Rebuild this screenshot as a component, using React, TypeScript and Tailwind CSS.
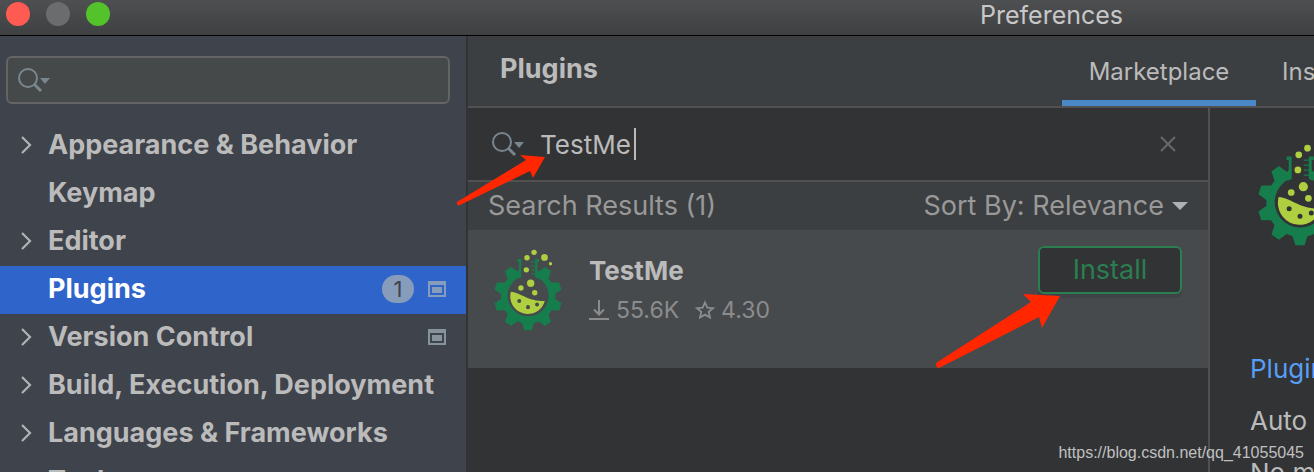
import React from "react";

function FlaskGear({ className }: { className: string }) {
  const teeth = [36, 72, 108, 144, 180, 216, 252, 288, 324];
  return (
    <svg viewBox="44 58 200 244" className={className} aria-hidden="true">
      <g fill="#167d4c">
        <path d="M118 122.500A81 81 0 1 0 171 122.500V142A61 61 0 1 1 118 142Z" />
        {teeth.map((a) => (
          <path key={a} transform={`rotate(${a} 144 199)`} d="M125 123L133 98H155L163 123Z" />
        ))}
        <path d="M112 88H124V142L114 146V124L117 120V96H112Z" />
        <path d="M177 88H165V95H153V98H165V107H153V110H165V119H153V122H165V131H153V134H165V142L175 146V124L172 120V96H177Z" />
      </g>
      <g fill="#b0cf40">
        <circle cx="162" cy="68" r="8" />
        <circle cx="141" cy="84" r="8" />
        <circle cx="193" cy="83" r="10" />
        <circle cx="211" cy="102" r="5" />
        <circle cx="139" cy="120" r="8" />
        <circle cx="152" cy="160" r="11" />
        <circle cx="123" cy="174" r="8" />
        <circle cx="164" cy="188" r="8" />
        <path
          fillRule="evenodd"
          d="M93 185C125 188 140 213 194 213A51.500 51.500 0 0 1 93 185ZM112 213a6 6 0 1 0 12 0a6 6 0 1 0-12 0M138 231a6 6 0 1 0 12 0a6 6 0 1 0-12 0M165 223a6 6 0 1 0 12 0a6 6 0 1 0-12 0"
        />
      </g>
    </svg>
  );
}

function SearchIcon() {
  return (
    <svg viewBox="0 0 32 26" className="h-[26px] w-8 shrink-0" aria-hidden="true">
      <circle cx="10" cy="11" r="9" fill="none" stroke="#7a868e" strokeWidth="2" />
      <path d="M16 17L23 24" stroke="#7a868e" strokeWidth="3" />
      <path d="M22 11H32L27 17Z" fill="#7a868e" />
    </svg>
  );
}

function ProjectIcon({ selected }: { selected?: boolean }) {
  return (
    <svg
      viewBox="0 0 18 16"
      className={selected ? "h-4 w-[18px] text-[#869cba]" : "h-4 w-[18px] text-[#87939a]"}
      fill="currentColor"
      aria-hidden="true"
    >
      <path fillRule="evenodd" d="M0 0H18V16H0ZM2 4V14H16V4Z" />
      <path d="M4 6H14V12H4Z" />
    </svg>
  );
}

type Section = { label: string; expandable?: boolean; project?: boolean; count?: number };

const sections: Section[] = [
  { label: "Appearance & Behavior", expandable: true },
  { label: "Keymap" },
  { label: "Editor", expandable: true },
  { label: "Plugins", count: 1, project: true },
  { label: "Version Control", expandable: true, project: true },
  { label: "Build, Execution, Deployment", expandable: true },
  { label: "Languages & Frameworks", expandable: true },
  { label: "Tools", expandable: true },
];

function Sidebar() {
  return (
    <aside className="flex w-[468px] shrink-0 flex-col border-r-2 border-[#323335] bg-[#3f434b]">
      <label className="mx-[6px] mt-5 mr-4 flex h-12 shrink-0 items-center gap-2 rounded-md border-2 border-[#646464] bg-[#45494a] pl-[10px]">
        <SearchIcon />
        <input
          aria-label="Search settings"
          className="min-w-0 flex-1 bg-transparent text-[26px] text-[#bbbbbb] outline-none"
        />
      </label>
      <nav className="mt-[18px] flex flex-col">
        {sections.map((s) => {
          const selected = s.count !== undefined;
          return (
            <button
              key={s.label}
              className={
                selected
                  ? "flex h-12 items-center bg-[#2f65ca] pr-5 pb-[3px] pl-5 text-left text-[27px] leading-8 font-bold text-white"
                  : "flex h-12 items-center pr-5 pb-[3px] pl-5 text-left text-[27px] leading-8 font-bold text-[#bbbbbb]"
              }
            >
              <span className="flex w-7 shrink-0 items-center">
                {s.expandable && (
                  <svg viewBox="0 0 12 18" className="h-[18px] w-3" aria-hidden="true">
                    <path d="M2 1L10 9L2 17" fill="none" stroke="#b0b2b4" strokeWidth="2.2" />
                  </svg>
                )}
              </span>
              <span className="flex-1 whitespace-nowrap">{s.label}</span>
              {s.count !== undefined && (
                <span className="mr-[14px] flex h-7 w-8 items-center justify-center rounded-full bg-[#869cba] text-[22px] font-normal text-[#3f434b]">
                  {s.count}
                </span>
              )}
              {s.project && <ProjectIcon selected={selected} />}
            </button>
          );
        })}
      </nav>
    </aside>
  );
}

function ResultCard() {
  return (
    <article className="flex h-[138px] items-start bg-[#464a4c] pt-4 pr-[26px] pl-[26px]">
      <FlaskGear className="mt-[3px] h-[82px] w-[68px]" />
      <div className="ml-[27px] flex-1">
        <h3 className="mt-[9px] text-[26px] leading-8 font-bold text-[#bbbbbb]">TestMe</h3>
        <div className="mt-[7px] flex h-8 items-center text-[23px] text-[#8c8c8c]">
          <svg viewBox="0 0 20 20" className="mr-[7px] h-5 w-5" fill="none" stroke="currentColor" strokeWidth="2" aria-hidden="true">
            <path d="M10 0V15M5 9.500L10 14.500L15 9.500M0 19H20" />
          </svg>
          <span>55.6K</span>
          <svg viewBox="0 0 20 20" className="mr-[6px] ml-4 h-5 w-5" fill="none" stroke="currentColor" strokeWidth="1.800" aria-hidden="true">
            <path d="M10 2.500L12.300 7.700L18 8.200L13.700 11.900L15 17.500L10 14.600L5 17.500L6.300 11.900L2 8.200L7.700 7.700Z" />
          </svg>
          <span>4.30</span>
        </div>
      </div>
      <button className="h-12 w-36 rounded-md border-2 border-[#2a7e50] bg-[#313335] text-[27px] text-[#2a7e50] shadow-[0_4px_0_#404345]">
        Install
      </button>
    </article>
  );
}

function Arrow({ className, d, box }: { className: string; d: string; box: string }) {
  return (
    <svg viewBox={box} className={className} aria-hidden="true">
      <path d={d} fill="#ff2600" />
    </svg>
  );
}

export default function App() {
  return (
    <div className="relative flex h-screen flex-col overflow-hidden bg-[#313335] font-['Inter','Noto_Sans',sans-serif] text-[#bbbbbb]">
      <header className="flex h-9 shrink-0 items-center border-b border-black bg-linear-to-b from-[#4e4f51] to-[#3f4042]">
        <div className="-mt-[7px] flex w-[122px] shrink-0 gap-4 pl-[6px]">
          <button aria-label="Close" className="size-6 rounded-full bg-[#ff5b52]" />
          <button aria-label="Minimize" className="size-6 rounded-full bg-[#6b6c6e]" />
          <button aria-label="Zoom" className="size-6 rounded-full bg-[#53c22b]" />
        </div>
        <h1 className="-mt-[5px] ml-auto w-[334px] text-[25px] leading-8 text-[#c8c8c8]">Preferences</h1>
      </header>
      <div className="flex min-h-0 flex-1">
        <Sidebar />
        <main className="flex min-w-0 flex-1 flex-col">
          <div className="flex h-[72px] shrink-0 items-center overflow-hidden border-b-2 border-[#515151] bg-[#3c3f41]">
            <h2 className="-mt-1 flex-1 pl-8 text-[27px] leading-8 font-bold">Plugins</h2>
            <div role="tablist" className="flex h-full w-[252px] shrink-0 text-[24px]">
              <button role="tab" aria-selected="true" className="w-[194px] shrink-0 border-b-[6px] border-[#4a88c7] pt-2">
                Marketplace
              </button>
              <button role="tab" aria-selected="false" className="shrink-0 border-b-[6px] border-transparent pt-2 pl-[26px]">
                Installed
              </button>
            </div>
          </div>
          <div className="flex min-h-0 flex-1">
            <section className="min-w-0 flex-1 border-r-2 border-[#515151]">
              <div className="flex h-[74px] items-center border-b-2 border-[#515151] pr-8 pl-6">
                <SearchIcon />
                <input
                  aria-label="Search plugins"
                  defaultValue="TestMe"
                  className="ml-4 w-[94px] min-w-0 bg-transparent text-[26px] outline-none"
                />
                <span className="h-8 w-[2px] bg-[#bbbbbb]" />
                <button aria-label="Clear search" className="ml-auto">
                  <svg viewBox="0 0 16 16" className="size-4" aria-hidden="true">
                    <path d="M1 1L15 15M15 1L1 15" stroke="#656b6e" strokeWidth="2" />
                  </svg>
                </button>
              </div>
              <div className="flex h-12 items-center justify-between bg-[#3c3f41] pr-5 pl-5 text-[27px] text-[#999999]">
                <span>Search Results (1)</span>
                <button className="flex items-center gap-2">
                  Sort By: Relevance
                  <svg viewBox="0 0 16 8" className="h-2 w-4" aria-hidden="true">
                    <path d="M0 0H16L8 8Z" fill="#afb1b3" />
                  </svg>
                </button>
              </div>
              <ResultCard />
            </section>
            <aside className="w-[104px] shrink-0 overflow-hidden pt-9 pl-10 whitespace-nowrap">
              <FlaskGear className="ml-2 h-[102px] w-[84px] max-w-none" />
              <a href="#homepage" className="mt-[97px] block text-[26px] leading-[52px] text-[#589df6]">
                Plugin homepage
              </a>
              <p className="text-[26px] leading-[52px]">Auto generate tests</p>
              <p className="text-[26px] leading-[52px]">No more boilerplate</p>
            </aside>
          </div>
        </main>
      </div>
      <Arrow className="absolute top-[152px] left-[456px] h-[54px] w-[92px]" box="456 152 92 54" d="M457 202L526 160L520 155L545 157L533 178L530 171L460 205Q456 206 457 202Z" />
      <Arrow className="absolute top-[292px] left-[934px] h-[78px] w-[128px]" box="934 292 128 78" d="M936 363L1031 302L1023 294L1060 296L1042 328L1039 317L941 367Q936 370 936 363Z" />
      <p className="absolute right-[10px] bottom-[9px] font-['Liberation_Sans',sans-serif] text-base leading-5 text-[#c0c0c0]">
        https://blog.csdn.net/qq_41055045
      </p>
    </div>
  );
}
